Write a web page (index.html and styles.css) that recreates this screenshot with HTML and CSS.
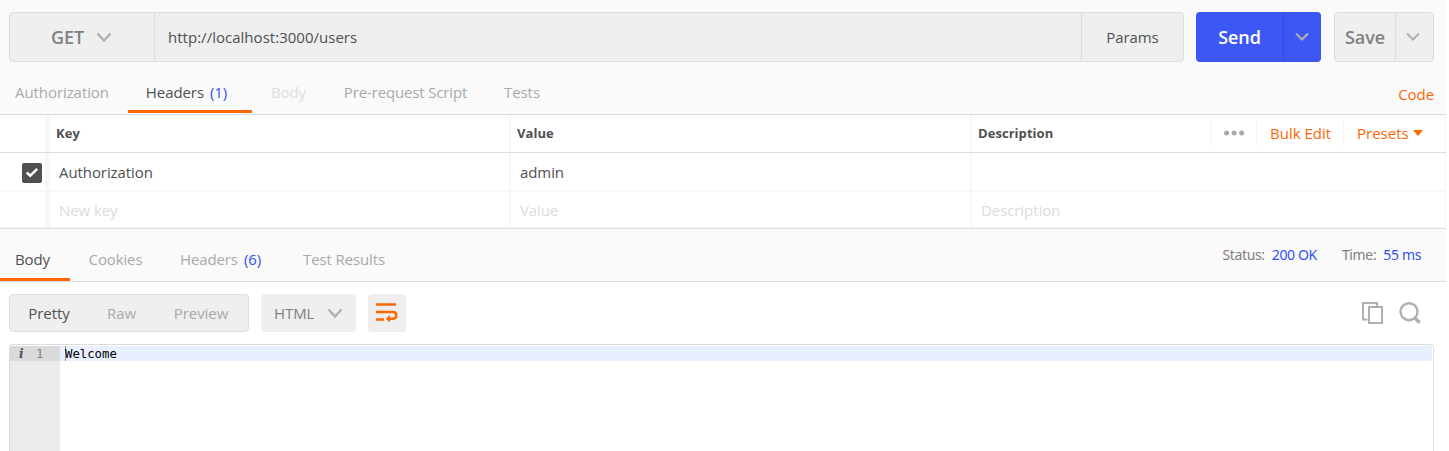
FILE: index.html
```html
<!DOCTYPE html>
<html lang="en">
<head>
<meta charset="utf-8">
<title>Request builder</title>
<link rel="stylesheet" href="styles.css">
</head>
<body>
<main class="app">
  <section class="request-bar">
    <div class="url-group">
      <div class="method"><span>GET</span><svg class="chev" width="16" height="11" viewBox="0 0 16 11"><path d="M1.500 1.500 8 8.500 14.500 1.500"/></svg></div>
      <div class="url">http://localhost:3000/users</div>
      <div class="params">Params</div>
    </div>
    <div class="split send"><span class="split-label">Send</span><span class="split-arrow"><svg class="chev" width="14" height="10" viewBox="0 0 14 10"><path d="M1 1.500 7 7.500 13 1.500"/></svg></span></div>
    <div class="split save"><span class="split-label">Save</span><span class="split-arrow"><svg class="chev" width="14" height="10" viewBox="0 0 14 10"><path d="M1 1.500 7 7.500 13 1.500"/></svg></span></div>
  </section>
  <nav class="tabs request-tabs">
    <span class="tab t-auth">Authorization</span>
    <span class="tab t-headers active">Headers<b class="count">(1)</b></span>
    <span class="tab t-body disabled">Body</span>
    <span class="tab t-pre">Pre-request Script</span>
    <span class="tab t-tests">Tests</span>
    <span class="code-link">Code</span>
  </nav>
  <section class="grid">
    <div class="row head">
      <div class="cell check"></div>
      <div class="cell">Key</div>
      <div class="cell">Value</div>
      <div class="cell last">Description
        <div class="tools">
          <span class="tool more"><svg width="22" height="6" viewBox="0 0 22 6"><circle cx="2.600" cy="3" r="2.500"/><circle cx="10.100" cy="3" r="2.500"/><circle cx="17.600" cy="3" r="2.500"/></svg></span>
          <span class="tool bulk">Bulk Edit</span>
          <span class="tool presets">Presets<svg width="10" height="6" viewBox="0 0 10 6"><path d="M0 0H10L5 6Z"/></svg></span>
        </div>
      </div>
    </div>
    <div class="row">
      <div class="cell check"><svg width="20" height="20" viewBox="0 0 20 20"><rect width="20" height="20" rx="2" fill="#505050"/><path d="M4.700 9.500 8.200 12.700 15.200 5.800" fill="none" stroke="#fff" stroke-width="2.500"/></svg></div>
      <div class="cell">Authorization</div>
      <div class="cell">admin</div>
      <div class="cell last"></div>
    </div>
    <div class="row ghost">
      <div class="cell check"></div>
      <div class="cell">New key</div>
      <div class="cell">Value</div>
      <div class="cell last">Description</div>
    </div>
  </section>
  <nav class="tabs response-tabs">
    <span class="tab r-body active">Body</span>
    <span class="tab r-cookies">Cookies</span>
    <span class="tab r-headers">Headers<b class="count">(6)</b></span>
    <span class="tab r-tests">Test Results</span>
    <div class="meta"><span class="status">Status:<b>200 OK</b></span><span class="time">Time:<b>55 ms</b></span></div>
  </nav>
  <section class="response">
    <div class="toolbar">
      <div class="modes"><span class="mode pretty on">Pretty</span><span class="mode raw">Raw</span><span class="mode preview">Preview</span></div>
      <div class="lang">HTML<svg class="chev" width="16" height="11" viewBox="0 0 16 11"><path d="M1.500 1.500 8 8.500 14.500 1.500"/></svg></div>
      <div class="wrap"><svg width="22" height="20" viewBox="0 0 22 20"><path d="M0 1.500H20M0 9H17Q20.300 9 20.300 12.300T17 15.700H13M0 16.500H8" fill="none" stroke="#ff6600" stroke-width="2.400"/><path d="M9.800 15.800 14 12V19.600Z" fill="#ff6600"/></svg></div>
      <div class="icons">
        <svg width="22" height="22" viewBox="0 0 22 22"><path d="M15 4V1H1V17.500H5.500M7 5H20V21H7Z"/></svg>
        <svg class="search" width="22" height="22" viewBox="0 0 22 22"><circle cx="10" cy="9.700" r="8.500"/><path d="M15.500 15.500 20.700 20.700" class="handle"/></svg>
      </div>
    </div>
    <div class="editor">
      <div class="gutter"><div class="line-no"><span class="info">i</span><span class="num">1</span></div></div>
      <div class="code"><div class="line"><span class="cursor"></span>Welcome</div></div>
    </div>
  </section>
</main>
</body>
</html>
```
FILE: styles.css
```css
* { box-sizing: border-box; }
body { margin: 0; background: #fff; }
.app { width: 1446px; height: 451px; overflow: hidden; display: flex; flex-direction: column; font: 15px/20px "Open Sans", "Noto Sans", sans-serif; letter-spacing: -0.08px; color: #505050; background: #fafafa; }
.app > * { flex: none; }
svg { flex: none; display: block; }
.chev { fill: none; stroke: #b0b0b0; stroke-width: 2.5; }
.split .chev { stroke-width: 2.1; }
.request-bar { display: flex; height: 74px; padding: 12px 12px 12px 9px; }
.url-group { display: flex; width: 1175px; border: 1px solid #dcdcdc; border-radius: 4px; background: #efefef; align-items: stretch; }
.method { width: 145px; display: flex; align-items: center; padding-left: 41px; gap: 12px; font-size: 18px; font-weight: 600; color: #808080; border-right: 1px solid #dcdcdc; }
.url { flex: 1; display: flex; align-items: center; padding-left: 13px; letter-spacing: 0.02px; }
.params { width: 102px; display: flex; align-items: center; justify-content: center; border-left: 1px solid #dcdcdc; }
.split { display: flex; border-radius: 4px; font-size: 18px; font-weight: 600; }
.split-label, .split-arrow { display: flex; align-items: center; justify-content: center; }
.split-arrow { padding-right: 1px; }
.send { width: 125px; margin-left: 12px; background: #3d57f4; color: #fff; }
.send .split-label { width: 87px; }
.send .split-arrow { flex: 1; border-left: 1px solid #344bd9; }
.save { width: 100px; margin-left: 13px; background: #efefef; color: #808080; border: 1px solid #dcdcdc; }
.save .split-label { width: 60px; }
.save .split-arrow { flex: 1; padding-right: 3px; border-left: 1px solid #dcdcdc; }
.tabs { display: flex; color: #a9a9a9; border-bottom: 1px solid #dcdcdc; }
.tab { display: flex; justify-content: center; }
.count, .meta b { font-weight: 400; color: #3050f0; }
.count { margin-left: 6px; }
.tab.active { color: #505050; border-bottom: 3px solid #ff6600; }
.tab.disabled { color: #dcdcdc; }
.request-tabs { height: 41px; padding-bottom: 1px; }
.request-tabs .tab { padding-top: 8px; }
.t-auth { width: 128px; padding-right: 4px; }
.t-headers { width: 124px; padding-right: 7px; }
.t-body { width: 73px; }
.t-pre { width: 161px; letter-spacing: -0.15px; }
.t-tests { width: 72px; }
.code-link { margin-left: auto; padding: 10px 12px 0 0; color: #ff6600; }
.grid { background: #fff; height: 114px; border-bottom: 1px solid #dcdcdc; }
.row { display: flex; height: 39px; border-bottom: 2px solid #f7f7f7; }
.row.ghost { height: 36px; border-bottom: 1px solid #f7f7f7; color: #dcdcdc; }
.row.head { height: 38px; border-bottom: 1px solid #dcdcdc; font-size: 13px; font-weight: 700; letter-spacing: 0.05px; }
.cell { width: 461px; display: flex; align-items: center; padding-left: 9px; border-right: 2px solid #f7f7f7; }
.row .cell.check { padding-top: 2px; }
.head .cell { padding-left: 6px; padding-bottom: 1px; }
.cell.check, .head .cell.check { width: 50px; padding-left: 22px; border-right: 5px solid #f7f7f7; }
.cell.last { flex: 1; border-right: 1px solid #f7f7f7; }
.tools { margin-left: auto; display: flex; align-items: center; font-size: 15px; font-weight: 400; letter-spacing: 0; color: #ff6600; }
.tool { height: 26px; display: flex; align-items: center; border-left: 1px solid #f4f4f4; }
.more { width: 46px; padding-left: 13px; fill: #a9a9a9; }
.bulk { width: 87px; padding-left: 13px; }
.presets { width: 102px; padding-left: 13px; gap: 4px; fill: #ff6600; }
.response-tabs { height: 53px; }
.response-tabs .tab { padding-top: 20px; letter-spacing: -0.12px; }
.r-body { width: 70px; padding-right: 5px; }
.r-cookies { width: 91px; }
.r-headers { width: 119px; }
.r-tests { width: 128px; }
.meta { margin-left: auto; display: flex; gap: 25px; padding: 16px 25px 0 0; font: 14px/20px "Noto Sans", sans-serif; letter-spacing: -0.35px; color: #808080; }
.meta b { margin-left: 7px; }
.response { height: 169px; background: #fff; padding: 12px 12px 0 9px; }
.toolbar { display: flex; height: 38px; }
.modes { width: 240px; display: flex; align-items: center; background: #efefef; border: 1px solid #dcdcdc; border-radius: 4px; color: #a9a9a9; }
.mode.on { color: #505050; }
.mode { display: flex; justify-content: center; }
.pretty { width: 78px; }
.raw { width: 67px; }
.preview { width: 92px; }
.lang { width: 95px; margin-left: 12px; padding-left: 13px; display: flex; align-items: center; gap: 13px; background: #efefef; border-radius: 4px; color: #808080; }
.wrap { width: 38px; margin-left: 12px; display: flex; align-items: center; justify-content: center; background: #efefef; border-radius: 4px; }
.icons { margin-left: auto; display: flex; align-items: center; gap: 15px; padding-right: 13px; fill: none; stroke: #b0b0b0; stroke-width: 2; }
.search { stroke-width: 2.4; }
.handle { stroke-width: 3.5; }
.editor { height: 130px; margin-top: 12px; display: flex; border: 1px solid #dcdcdc; border-radius: 4px; padding: 1px 1px 0 0; font: 12.300px/16px "DejaVu Sans Mono", monospace; letter-spacing: 0; color: #000; }
.gutter { width: 50px; background: #ebebeb; }
.line-no { display: flex; height: 15px; background: #dadada; color: #808080; }
.info { width: 26px; padding-left: 9px; font: italic 700 12px/16px "DejaVu Serif", serif; color: #505050; }
.code { flex: 1; }
.line { display: flex; height: 15px; background: #e8f0ff; padding-left: 5px; }
.cursor { width: 1px; margin-right: -1px; background: #909090; }
```
